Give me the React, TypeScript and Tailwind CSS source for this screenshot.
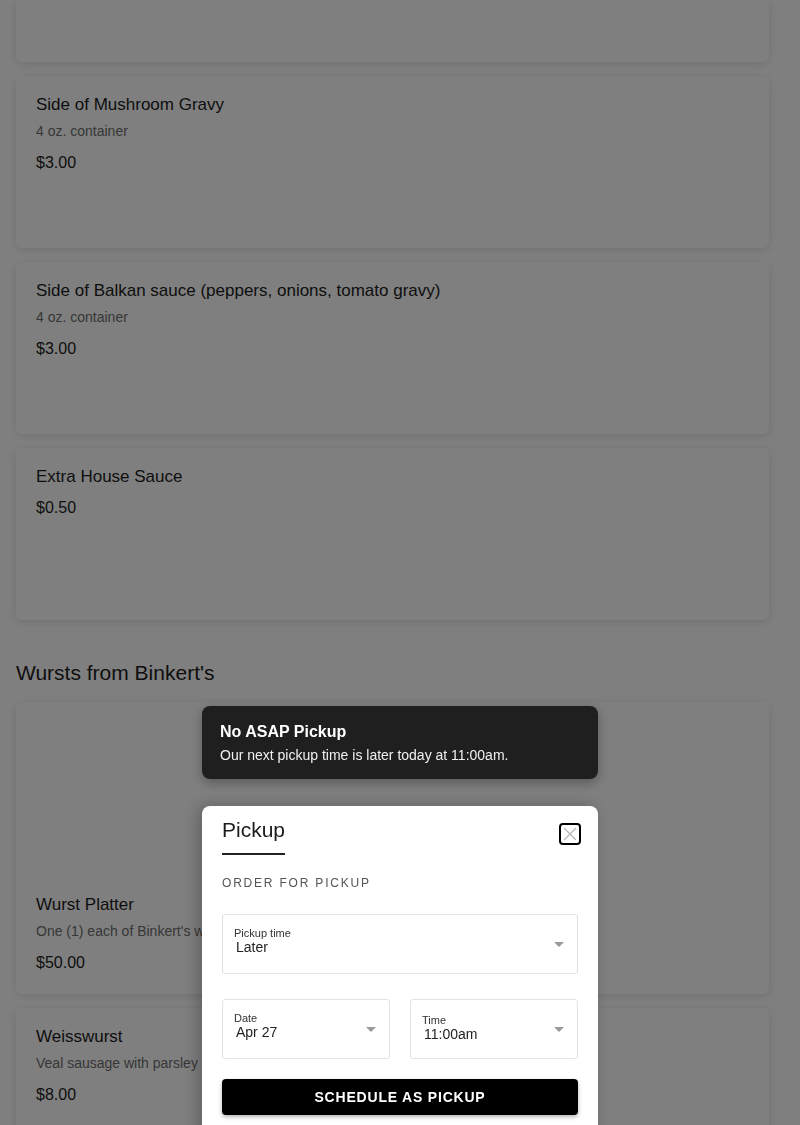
import type { ReactNode } from 'react'

interface Item { name: string; desc?: string; price: string; image?: boolean }

const sides: Item[] = [
  { name: 'Side of Mushroom Gravy', desc: '4 oz. container', price: '$3.00' },
  { name: 'Side of Balkan sauce (peppers, onions, tomato gravy)', desc: '4 oz. container', price: '$3.00' },
  { name: 'Extra House Sauce', price: '$0.50' },
]

const wursts: Item[] = [
  { name: 'Wurst Platter', desc: "One (1) each of Binkert's wursts", price: '$50.00', image: true },
  { name: 'Weisswurst', desc: 'Veal sausage with parsley', price: '$8.00' },
]

function Card({ item, className = '' }: { item: Item; className?: string }) {
  return (
    <div className={`bg-white rounded-[6px] shadow-[0_2px_8px_rgba(0,0,0,0.12)] ${className}`}>
      {item.image && <div className="h-[174px]" />}
      <div className="px-5 pt-[19px] pb-5">
        <div className="text-[17px] leading-[20px] text-[#1c1c1c]">{item.name}</div>
        {item.desc && <div className="mt-[8px] text-[14px] leading-[17px] text-[#6e6e6e]">{item.desc}</div>}
        <div className={`${item.desc ? 'mt-[13px]' : 'mt-[11px]'} text-[16px] leading-[20px] text-[#1c1c1c]`}>{item.price}</div>
      </div>
    </div>
  )
}

function Field({ label, value, className = '', labelTop = 'pt-[13px]' }: { label: string; value: string; className?: string; labelTop?: string }) {
  return (
    <div className={`relative h-[60px] border border-[#e2e2e2] rounded-[3px] px-[11px] ${labelTop} ${className}`}>
      <div className="text-[11px] leading-[12px] text-[#333]">{label}</div>
      <div className="pl-[2px] text-[14px] leading-[16px] text-[#222]">{value}</div>
      <svg className="absolute right-[13px] top-[27px]" width="10" height="5" viewBox="0 0 10 5">
        <path d="M0 0 L10 0 L5 5 Z" fill="#9a9a9a" />
      </svg>
    </div>
  )
}

function Overlay({ children }: { children: ReactNode }) {
  return <div className="fixed inset-0 bg-black/50 flex flex-col items-center pt-[706px] overflow-hidden">{children}</div>
}

export default function App() {
  return (
    <div className="min-h-screen bg-white pl-4 pr-[31px] pb-10 overflow-hidden" style={{ fontFamily: '"Liberation Sans", Arial, sans-serif' }}>
      <div className="flex flex-col gap-[14px]">
        <div className="h-[62px] bg-white rounded-b-[6px] shadow-[0_2px_8px_rgba(0,0,0,0.12)]" />
        {sides.map((s) => (
          <Card key={s.name} item={s} className="h-[172px]" />
        ))}
      </div>
      <h2 className="mt-[40px] mb-[16px] text-[21px] leading-[26px] text-[#1c1c1c]">Wursts from Binkert's</h2>
      <div className="flex flex-col gap-[14px]">
        {wursts.map((w) => (
          <Card key={w.name} item={w} className={w.image ? 'h-[292px]' : 'h-[172px]'} />
        ))}
      </div>

      <Overlay>
        <div className="shrink-0 w-[396px] h-[73px] bg-[#1f1f1f] rounded-[8px] shadow-[0_4px_12px_rgba(0,0,0,0.3)] px-[18px] pt-[16px]">
          <div className="text-[16px] leading-[20px] font-bold text-white">No ASAP Pickup</div>
          <div className="mt-[4px] text-[14px] leading-[18px] text-[#f0f0f0]">Our next pickup time is later today at 11:00am.</div>
        </div>

        <div className="shrink-0 mt-[27px] w-[396px] bg-white rounded-t-[8px] shadow-[-4px_0_16px_rgba(0,0,0,0.25)] px-5 pt-[10px] pb-10">
          <div className="flex items-start justify-between">
            <div className="border-b-2 border-[#222] pb-[9px]">
              <div className="text-[21px] leading-[28px] text-[#1c1c1c]">Pickup</div>
            </div>
            <button className="mt-[7px] -mr-[3px] w-[22px] h-[22px] border-2 border-black rounded-[4px] flex items-center justify-center">
              <svg width="14" height="14" viewBox="0 0 14 14">
                <path d="M1 1 L13 13 M13 1 L1 13" stroke="#b8b8b8" strokeWidth="1.3" />
              </svg>
            </button>
          </div>

          <div className="mt-[20px] text-[12px] leading-[16px] tracking-[1.8px] text-[#555]">ORDER FOR PICKUP</div>

          <Field label="Pickup time" value="Later" className="mt-[23px]" labelTop="pt-[12px]" />

          <div className="mt-[25px] grid grid-cols-2 gap-5">
            <Field label="Date" value="Apr 27" labelTop="pt-[12px]" />
            <Field label="Time" value="11:00am" labelTop="pt-[14px]" />
          </div>

          <button className="mt-[20px] w-full h-[36px] bg-black rounded-[4px] shadow-[0_2px_4px_rgba(0,0,0,0.3)] text-white text-[14px] font-semibold tracking-[0.8px]">
            SCHEDULE AS PICKUP
          </button>
        </div>
      </Overlay>
    </div>
  )
}
